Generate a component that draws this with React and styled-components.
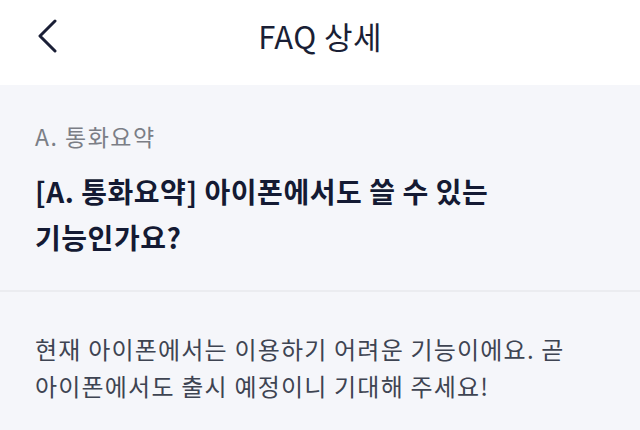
import React from 'react';
import styled, { createGlobalStyle } from 'styled-components';

const GlobalStyle = createGlobalStyle`
  html, body {
    margin: 0;
    padding: 0;
    background: #f5f6fa;
    font-family: 'Noto Sans CJK KR', 'Noto Sans', sans-serif;
  }
`;

const Page = styled.div`
  width: 640px;
  min-height: 430px;
  background: #f5f6fa;
`;

const Header = styled.header`
  height: 85px;
  background: #ffffff;
  display: grid;
  grid-template-columns: 1fr auto 1fr;
  align-items: center;
`;

const BackButton = styled.button`
  justify-self: start;
  margin-left: 33px;
  margin-top: -14px;
  width: 28px;
  height: 36px;
  padding: 0;
  border: none;
  background: transparent;
  display: flex;
  align-items: center;
  justify-content: center;
`;

const Title = styled.h1`
  margin: 0;
  margin-top: -15px;
  font-size: 31px;
  font-weight: 400;
  color: #1a1f36;
  letter-spacing: 0.4px;
`;

const QuestionSection = styled.section`
  padding: 36px 35px 30px;
  border-bottom: 2px solid #ebecf0;
`;

const Category = styled.div`
  font-size: 23px;
  line-height: 30px;
  letter-spacing: 1.5px;
  color: #7b7e86;
`;

const Question = styled.h2`
  margin: 17px 0 0;
  font-size: 28px;
  line-height: 46px;
  letter-spacing: 0.55px;
  font-weight: 700;
  color: #141a33;
`;

const AnswerSection = styled.section`
  padding: 38px 35px 20px;
`;

const Answer = styled.p`
  margin: 0;
  font-size: 24px;
  line-height: 37px;
  letter-spacing: 1.2px;
  color: #3e4452;
`;

function ChevronLeft() {
  return (
    <svg width="22" height="34" viewBox="0 0 22 34" fill="none">
      <path
        d="M19 2 L4 17 L19 32"
        stroke="#1a1f36"
        strokeWidth="3"
        strokeLinecap="round"
        strokeLinejoin="round"
      />
    </svg>
  );
}

export default function App() {
  return (
    <Page>
      <GlobalStyle />
      <Header>
        <BackButton aria-label="back">
          <ChevronLeft />
        </BackButton>
        <Title>FAQ 상세</Title>
        <div />
      </Header>
      <QuestionSection>
        <Category>A. 통화요약</Category>
        <Question>
          [A. 통화요약] 아이폰에서도 쓸 수 있는
          <br />
          기능인가요?
        </Question>
      </QuestionSection>
      <AnswerSection>
        <Answer>
          현재 아이폰에서는 이용하기 어려운 기능이에요. 곧
          <br />
          아이폰에서도 출시 예정이니 기대해 주세요!
        </Answer>
      </AnswerSection>
    </Page>
  );
}
